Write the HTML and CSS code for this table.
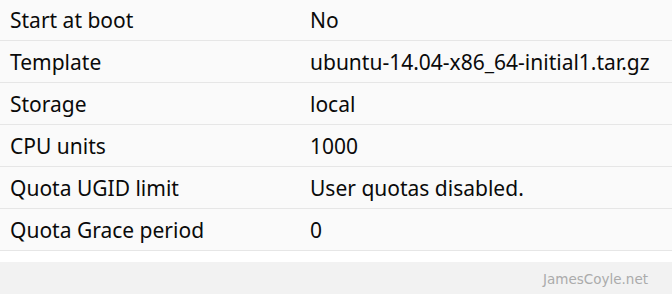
FILE: index.html
```html
<!DOCTYPE html>
<html>
<head>
<meta charset="utf-8">
<link rel="stylesheet" href="styles.css">
</head>
<body>
<div class="props">
  <div class="row"><div class="label">Start at boot</div><div class="value">No</div></div>
  <div class="row"><div class="label">Template</div><div class="value">ubuntu-14.04-x86_64-initial1.tar.gz</div></div>
  <div class="row"><div class="label">Storage</div><div class="value">local</div></div>
  <div class="row"><div class="label">CPU units</div><div class="value">1000</div></div>
  <div class="row"><div class="label">Quota UGID limit</div><div class="value">User quotas disabled.</div></div>
  <div class="row"><div class="label">Quota Grace period</div><div class="value">0</div></div>
</div>
<div class="footer"><span class="mark">JamesCoyle.net</span></div>
</body>
</html>
```
FILE: styles.css
```css
html, body {
  margin: 0;
  padding: 0;
  background: #ffffff;
}
body {
  width: 672px;
  height: 294px;
  overflow: hidden;
  font-family: "Noto Sans", "Liberation Sans", Arial, sans-serif;
}
.props {
  margin-top: -1px;
}
.row {
  display: grid;
  grid-template-columns: 300px 1fr;
  align-items: center;
  height: 41px;
  border-bottom: 1px solid #e6e6e6;
  background: #fafafa;
  font-size: 21px;
  color: #0a0a0a;
}
.label {
  padding-left: 10px;
  padding-top: 1px;
}
.value {
  padding-left: 10px;
  padding-top: 1px;
}
.footer {
  margin-top: 11px;
  height: 32px;
  background: #f2f2f2;
  display: flex;
  justify-content: flex-end;
  align-items: center;
  padding-right: 24px;
}
.mark {
  font-family: "DejaVu Sans", sans-serif;
  font-size: 13.5px;
  color: #ababab;
  padding-top: 1px;
}
```
